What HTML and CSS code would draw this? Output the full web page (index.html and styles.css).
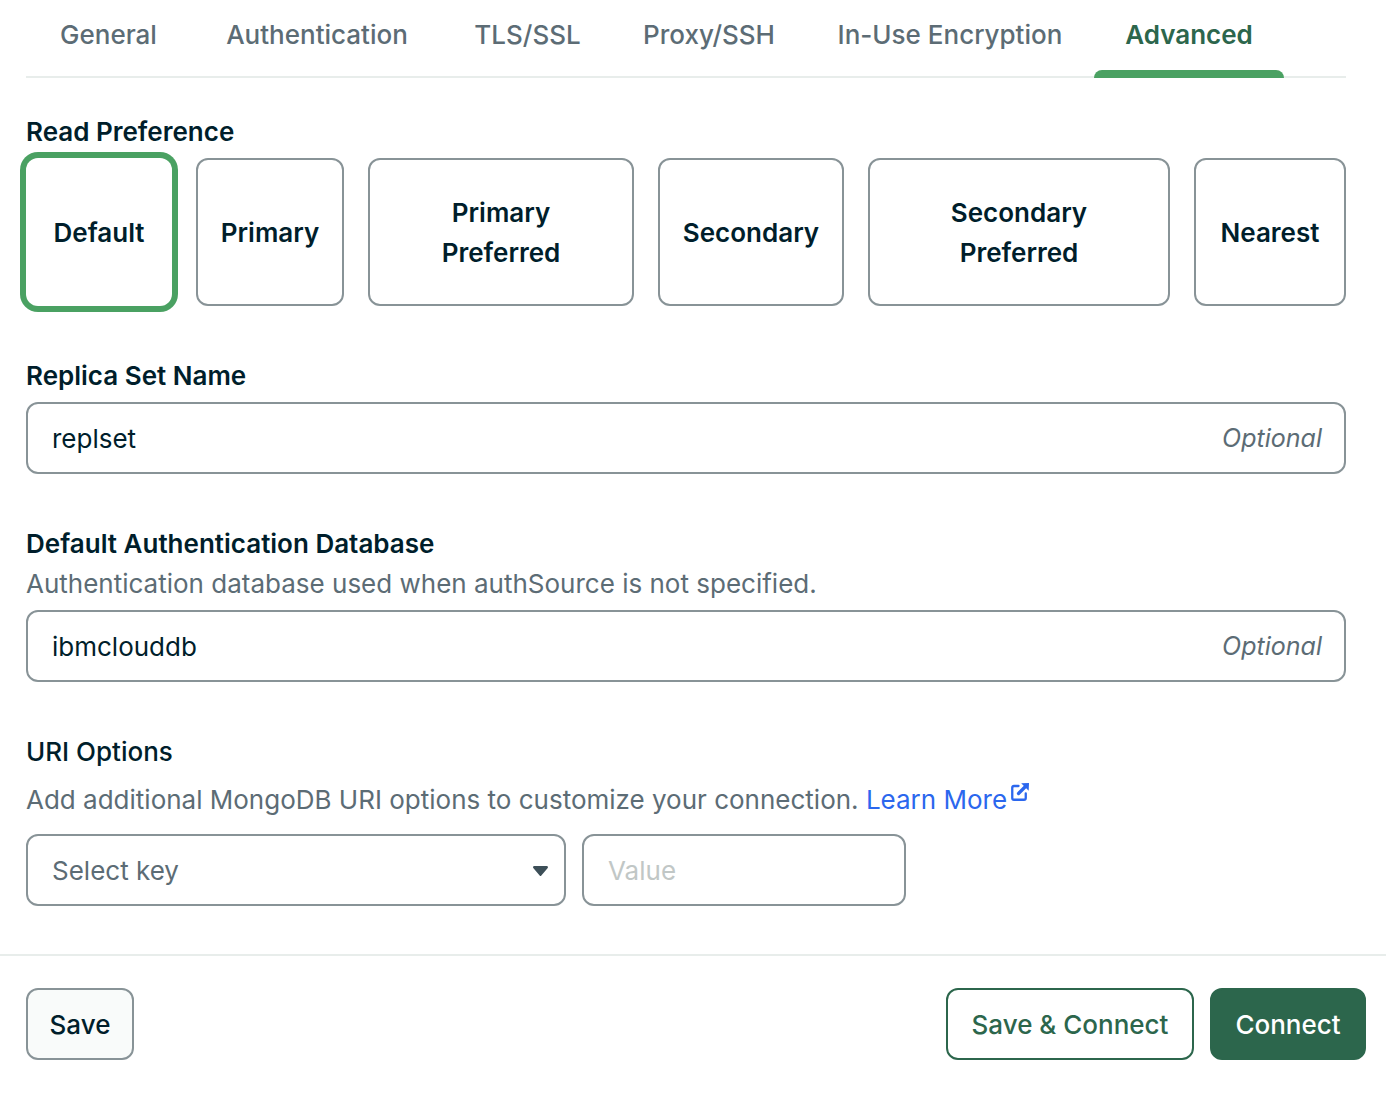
FILE: index.html
```html
<!DOCTYPE html>
<html lang="en">
<head>
<meta charset="utf-8">
<meta name="viewport" content="width=device-width, initial-scale=1">
<title>Advanced Connection Options</title>
<link rel="stylesheet" href="styles.css">
</head>
<body>
<form class="connection-form">
  <main class="content">
    <div class="tabs" role="tablist">
      <button class="tab" type="button" role="tab">General</button>
      <button class="tab" type="button" role="tab">Authentication</button>
      <button class="tab" type="button" role="tab">TLS/SSL</button>
      <button class="tab" type="button" role="tab">Proxy/SSH</button>
      <button class="tab" type="button" role="tab">In-Use Encryption</button>
      <button class="tab tab-active" type="button" role="tab" aria-selected="true">Advanced</button>
    </div>

    <fieldset class="field read-preference">
      <legend class="label">Read Preference</legend>
      <div class="cards">
        <label class="card"><input class="card-radio" type="radio" name="readPreference" checked><span class="card-text">Default</span></label>
        <label class="card"><input class="card-radio" type="radio" name="readPreference"><span class="card-text">Primary</span></label>
        <label class="card"><input class="card-radio" type="radio" name="readPreference"><span class="card-text">Primary Preferred</span></label>
        <label class="card"><input class="card-radio" type="radio" name="readPreference"><span class="card-text">Secondary</span></label>
        <label class="card"><input class="card-radio" type="radio" name="readPreference"><span class="card-text">Secondary Preferred</span></label>
        <label class="card"><input class="card-radio" type="radio" name="readPreference"><span class="card-text">Nearest</span></label>
      </div>
    </fieldset>

    <div class="field">
      <label class="label" for="replica-set">Replica Set Name</label>
      <div class="control">
        <input class="control-input" id="replica-set" type="text" value="replset">
        <span class="optional">Optional</span>
      </div>
    </div>

    <div class="field">
      <label class="label" for="auth-database">Default Authentication Database</label>
      <p class="description" id="auth-description">Authentication database used when authSource is not specified.</p>
      <div class="control">
        <input class="control-input" id="auth-database" type="text" value="ibmclouddb" aria-describedby="auth-description">
        <span class="optional">Optional</span>
      </div>
    </div>

    <section class="field">
      <h2 class="section-title">URI Options</h2>
      <p class="uri-description">Add additional MongoDB URI options to customize your connection. <a class="link" href="#learn-more">Learn More<svg class="link-icon" viewBox="0 0 18 18" aria-hidden="true"><path d="M7.500 3H3Q1.250 3 1.250 4.750V15Q1.250 16.750 3 16.750H13Q14.750 16.750 14.750 15V10.500" fill="none" stroke="currentColor" stroke-width="2.300" stroke-linecap="round"/><path d="M7.500 10.500L14 4" fill="none" stroke="currentColor" stroke-width="3.200" stroke-linecap="round"/><path d="M10.200 0.300L18 0L17.700 7.800Z" fill="currentColor"/></svg></a></p>
      <div class="uri-row">
        <div class="select-wrap">
          <select class="control select" aria-label="Key">
            <option>Select key</option>
          </select>
          <svg class="caret" viewBox="0 0 16 16" aria-hidden="true"><path d="M8.679 10.796a.554.554 0 0 1-.858 0L4.640 6.976C4.320 6.594 4.582 6 5.069 6h6.362c.487 0 .748.594.430.976l-3.182 3.820z" fill="currentColor"/></svg>
        </div>
        <input class="control value-input" type="text" placeholder="Value" aria-label="Value">
      </div>
    </section>
  </main>

  <footer class="footer">
    <button class="button button-save" type="button">Save</button>
    <button class="button button-outline" type="button">Save &amp; Connect</button>
    <button class="button button-primary" type="submit">Connect</button>
  </footer>
</form>
</body>
</html>
```
FILE: styles.css
```css
:root {
  --text: #001e2b;
  --muted: #5c6c75;
  --border: #889397;
  --divider: #e8edeb;
  --green: #2c664c;
  --green-light: #4aa162;
  --blue: #2b67ee;
}

* {
  box-sizing: border-box;
}

body {
  margin: 0;
  background: #fff;
  color: var(--text);
  font-family: Inter, "Liberation Sans", sans-serif;
  font-size: 26px;
  line-height: 40px;
}

button,
input,
select {
  font: inherit;
  color: inherit;
}

.content {
  padding: 0 40px 48px 26px;
}

.tabs {
  display: grid;
  grid-template-columns: 165fr 252fr 169fr 194fr 288fr 190fr 62fr;
  height: 78px;
  box-shadow: inset 0 -2px var(--divider);
}

.tab {
  padding: 0 0 8px;
  border: 0;
  background: none;
  color: var(--muted);
  font-weight: 500;
  white-space: nowrap;
  cursor: pointer;
}

.tab-active {
  display: flex;
  flex-direction: column;
  align-items: center;
  justify-content: space-between;
  padding: 15px 0 0;
  color: var(--green);
  font-weight: 600;
}

.tab-active::after {
  content: "";
  width: 100%;
  height: 8px;
  border-radius: 8px 8px 0 0;
  background: var(--green-light);
}

.field {
  min-width: 0;
  margin: 50px 0 0;
  padding: 0;
  border: 0;
}

.read-preference {
  margin-top: 34px;
}

.label {
  display: block;
  padding: 0;
  font-weight: 600;
}

.cards {
  display: grid;
  grid-template-columns: 146fr 148fr 266fr 186fr 302fr 152fr;
  gap: 24px;
  margin-top: 6px;
}

.card {
  display: flex;
  align-items: center;
  justify-content: center;
  min-width: 0;
  height: 148px;
  padding-top: 2px;
  border: 2px solid var(--border);
  border-radius: 12px;
  font-weight: 600;
  text-align: center;
  cursor: pointer;
}

.card:has(:checked) {
  border-color: transparent;
  box-shadow: 0 0 0 6px var(--green-light);
}

.card-radio {
  position: absolute;
  opacity: 0;
}

.card-text {
  max-width: 160px;
}

.control {
  display: flex;
  align-items: center;
  height: 72px;
  padding: 0 22px 0 24px;
  border: 2px solid var(--border);
  border-radius: 12px;
  background: #fff;
}

.label + .control,
.description + .control {
  margin-top: 6px;
}

.control-input {
  flex: 1;
  min-width: 0;
  padding: 2px 0 0;
  border: 0;
  outline: 0;
  background: none;
}

.optional {
  color: var(--muted);
  font-size: 25px;
  font-style: italic;
}

.description,
.uri-description {
  margin: 0;
  color: var(--muted);
}

.section-title {
  margin: 0 0 8px;
  font-size: 26px;
  font-weight: 500;
}

.link {
  color: var(--blue);
  text-decoration: none;
}

.link-icon {
  width: 18px;
  height: 18px;
  margin-left: 4px;
  vertical-align: 8px;
}

.uri-row {
  display: grid;
  grid-template-columns: 540fr 324fr 424fr;
  gap: 16px;
  margin-top: 14px;
}

.select-wrap {
  position: relative;
}

.select {
  width: 100%;
  padding-top: 2px;
  appearance: none;
  color: var(--muted);
}

.caret {
  position: absolute;
  top: 20px;
  right: 10px;
  width: 32px;
  height: 32px;
  color: #3d4f58;
  pointer-events: none;
}

.value-input {
  width: 100%;
}

.value-input::placeholder {
  color: #c1c7c6;
  opacity: 1;
}

.footer {
  display: flex;
  gap: 16px;
  padding: 32px 20px 36px 26px;
  border-top: 2px solid var(--divider);
}

.button {
  min-width: 108px;
  height: 72px;
  padding: 2px 20px 0;
  border: 2px solid var(--green);
  border-radius: 12px;
  background: #fff;
  color: var(--green);
  font-weight: 500;
  white-space: nowrap;
  cursor: pointer;
}

.button-save {
  margin-right: auto;
  border-color: var(--border);
  background: #f9fbfa;
  color: var(--text);
}

.button-outline {
  min-width: 248px;
}

.button-primary {
  min-width: 156px;
  background: var(--green);
  color: #fff;
}
```
